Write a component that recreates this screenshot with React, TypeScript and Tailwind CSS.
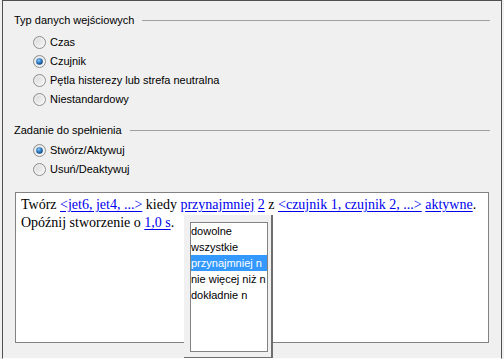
import { useId } from 'react';

function Radio({ checked = false }: { checked?: boolean }) {
  const id = useId().replace(/:/g, '');
  return (
    <svg width="13" height="13" viewBox="0 0 13 13" className="shrink-0">
      <defs>
        <linearGradient id={`bg${id}`} x1="0" y1="0" x2="1" y2="1">
          <stop offset="0" stopColor="#d4d4d4" />
          <stop offset="1" stopColor="#fbfbfb" />
        </linearGradient>
        <radialGradient id={`dot${id}`} cx="0.4" cy="0.35" r="0.7">
          <stop offset="0" stopColor="#8cc6f5" />
          <stop offset="0.5" stopColor="#2f7ec6" />
          <stop offset="1" stopColor="#0b3e72" />
        </radialGradient>
      </defs>
      <circle cx="6.5" cy="6.5" r="6" fill={`url(#bg${id})`} stroke="#8e8f8f" />
      <circle cx="6.5" cy="6.5" r="4.5" fill="none" stroke="#f4f4f4" strokeWidth="0.8" />
      {checked && <circle cx="6.5" cy="6.5" r="3.3" fill={`url(#dot${id})`} />}
    </svg>
  );
}

function GroupHeader({ label }: { label: string }) {
  return (
    <div className="flex items-center h-[14px] pl-[11px] pr-[11px]">
      <span className="whitespace-nowrap">{label}</span>
      <div className="flex-1 h-px bg-[#a0a0a0] ml-[8px]" />
    </div>
  );
}

function RadioRow({ label, checked }: { label: string; checked?: boolean }) {
  return (
    <div className="flex items-center h-[19px] pl-[30px] gap-[4px]">
      <Radio checked={checked} />
      <span>{label}</span>
    </div>
  );
}

const Link = ({ children }: { children: React.ReactNode }) => (
  <span className="text-[#0000ee] underline underline-offset-2">{children}</span>
);

const options = ['dowolne', 'wszystkie', 'przynajmniej n', 'nie więcej niż n', 'dokładnie n'];

export default function App() {
  return (
    <div className="relative w-[504px] h-[359px] overflow-hidden bg-[#f0f0f0] font-['Liberation_Sans',Arial,sans-serif] text-[11px] text-black">
      <div className="ml-[2px] w-[500px] h-full border-t border-l border-r border-[#505050] border-b border-b-[#fcfcfc]">
        <div className="pt-[12px]">
          <GroupHeader label="Typ danych wejściowych" />
        </div>
        <div className="mt-[6px]">
          <RadioRow label="Czas" />
          <RadioRow label="Czujnik" checked />
          <RadioRow label="Pętla histerezy lub strefa neutralna" />
          <RadioRow label="Niestandardowy" />
        </div>

        <div className="mt-[14px]">
          <GroupHeader label="Zadanie do spełnienia" />
        </div>
        <div className="mt-[4px]">
          <RadioRow label="Stwórz/Aktywuj" checked />
          <RadioRow label="Usuń/Deaktywuj" />
        </div>

        <div className="mt-[13px] ml-[12px] w-[474px] h-[151px] bg-white border border-[#828282] pt-[3px] pl-[5px] font-['Liberation_Serif','Times_New_Roman',serif] text-[14px] leading-[18px]">
          <div className="whitespace-nowrap">
            Twórz <Link>&lt;jet6, jet4, ...&gt;</Link> kiedy <Link>przynajmniej</Link> <Link>2</Link> z{' '}
            <Link>&lt;czujnik 1, czujnik 2, ...&gt;</Link> <Link>aktywne</Link>.
          </div>
          <div className="whitespace-nowrap">
            Opóźnij stworzenie o <Link>1,0 s</Link>.
          </div>
        </div>
      </div>

      {/* dropdown list */}
      <div className="absolute left-[184px] top-[215px] w-[89px] h-[143px] bg-[#f0f0f0] border-r-2 border-b border-[#6e6e6e] pl-[6px] pt-[7px]">
        <div className="w-[78px] h-[130px] bg-white border border-[#828282]">
          {options.map((o, i) => (
            <div
              key={o}
              className={`h-[16px] leading-[16px] whitespace-nowrap ${
                i === 2 ? 'bg-[#3399ff] text-white' : 'text-black'
              }`}
            >
              {o}
            </div>
          ))}
        </div>
      </div>
    </div>
  );
}
